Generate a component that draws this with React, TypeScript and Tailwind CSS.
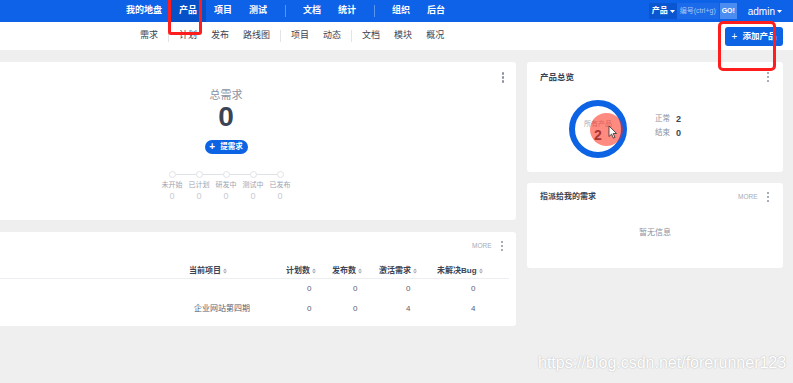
import React from "react";

const Dots = () => (
  <div className="flex flex-col gap-[1.5px]">
    <span className="w-[2.5px] h-[2.5px] rounded-full bg-[#8b91a0]" />
    <span className="w-[2.5px] h-[2.5px] rounded-full bg-[#8b91a0]" />
    <span className="w-[2.5px] h-[2.5px] rounded-full bg-[#8b91a0]" />
  </div>
);

const Caret = () => (
  <svg width="5" height="3" viewBox="0 0 5 3" className="ml-[2px] shrink-0">
    <path d="M0 0h5L2.5 3z" fill="#fff" />
  </svg>
);

const Sort = () => (
  <svg width="4" height="6" viewBox="0 0 4 6" className="ml-[2px]">
    <path d="M0 2.4L2 0.4 4 2.4zM0 3.6h4L2 5.6z" fill="#a6abb6" />
  </svg>
);

const Sep = ({ className }: { className: string }) => <span className={className} />;

const mainNav = ["我的地盘", "产品", "项目", "测试", "|", "文档", "统计", "|", "组织", "后台"];
const subNav = ["需求", "|", "计划", "发布", "路线图", "|", "项目", "动态", "|", "文档", "模块", "概况"];
const steps = ["未开始", "已计划", "研发中", "测试中", "已发布"];

export default function App() {
  return (
    <div className="relative w-[793px] h-[383px] overflow-hidden bg-[#efefef] font-['Liberation_Sans','Noto_Sans_CJK_SC',sans-serif] text-[#3c4353]">
      {/* top nav */}
      <div className="h-[22px] bg-[#0d62e8] flex items-stretch">
        <div className="flex items-stretch ml-[117.5px]">
          {mainNav.map((n, i) =>
            n === "|" ? (
              <div key={i} className="flex items-center mx-[9px]">
                <Sep className="w-px h-[12px] bg-[#5b95f0]" />
              </div>
            ) : (
              <div
                key={i}
                className={`flex items-center px-[8.5px] text-[9px] font-bold text-white ${n === "产品" ? "bg-[#0650c8]" : ""}`}
              >
                {n}
              </div>
            )
          )}
        </div>
        <div className="ml-auto flex items-center pr-[11px]">
          <div className="flex items-center h-[16px]">
            <div className="flex items-center h-full pl-[3px] pr-[2px] bg-[#0a55d0] text-white text-[8px] font-bold whitespace-nowrap">
              产品
              <Caret />
            </div>
            <div className="flex items-center h-full w-[42px] pl-[3px] bg-[#1a6aea] text-[#a9c6f3] text-[7px] whitespace-nowrap">
              编号(ctrl+g)
            </div>
            <div className="flex items-center justify-center h-full w-[17px] ml-[1px] bg-[#4a8cf0] text-white text-[7px] font-bold">
              GO!
            </div>
          </div>
          <div className="flex items-center ml-[11px] text-white text-[10px]">
            admin
            <Caret />
          </div>
        </div>
      </div>

      {/* sub nav */}
      <div className="h-[28px] bg-white flex items-center">
        <div className="flex items-center ml-[133px]">
          {subNav.map((n, i) =>
            n === "|" ? (
              <Sep key={i} className="mx-[3px] w-px h-[12px] bg-[#e2e4e8]" />
            ) : (
              <div key={i} className="px-[7px] text-[9px] text-[#3c4353]">
                {n}
              </div>
            )
          )}
        </div>
        <div className="ml-auto mr-[10px] flex items-center justify-center h-[19px] w-[58px] rounded-[3px] bg-[#0c63e4] text-white text-[8.5px] font-bold">
          <span className="mr-[5px] text-[10px] font-normal">+</span>添加产品
        </div>
      </div>

      {/* content */}
      <div className="flex gap-[11px] pt-[12px] pr-[10px]">
        <div className="w-[516px] flex flex-col gap-[12px]">
          {/* total stories */}
          <div className="h-[158px] bg-white rounded-r-[3px] flex">
            <div className="w-[452px] flex flex-col items-center pt-[26px]">
              <div className="text-[11px] leading-[14px] text-[#8b91a0]">总需求</div>
              <div className="text-[28px] leading-[28px] font-bold mt-[1px] text-[#3c4353]">0</div>
              <div className="mt-[9px] h-[14px] w-[43px] rounded-full bg-[#0c63e4] flex items-center justify-center text-white text-[7.5px] font-bold">
                <span className="mr-[5px] text-[10px] leading-[10px]">+</span>提需求
              </div>
              <div className="mt-[17px] flex items-center">
                {steps.map((s, i) => (
                  <React.Fragment key={s}>
                    {i > 0 && <span className="w-[20px] h-px bg-[#dfe2e6]" />}
                    <span className="w-[7px] h-[7px] rounded-full border border-[#dfe2e6] bg-white" />
                  </React.Fragment>
                ))}
              </div>
              <div className="mt-[2px] flex">
                {steps.map((s) => (
                  <div key={s} className="w-[27px] flex flex-col items-center">
                    <span className="text-[7px] leading-[10px] text-[#9ea3b0]">{s}</span>
                    <span className="text-[9px] leading-[12px] text-[#c7cad1]">0</span>
                  </div>
                ))}
              </div>
            </div>
            <div className="ml-auto pt-[10px] pr-[12px]">
              <Dots />
            </div>
          </div>

          {/* product table */}
          <div className="h-[94px] bg-white rounded-r-[3px] flex flex-col">
            <div className="h-[28px] flex items-center justify-end pr-[13px]">
              <span className="text-[6.5px] text-[#a6abb6] mr-[9px]">MORE</span>
              <Dots />
            </div>
            <div className="mt-[4px] mr-[7px] h-[15px] border-b border-[#eceef1] grid grid-cols-[185px_97px_46px_47px_58px_1fr] items-center text-[8px] font-bold text-[#3c4353]">
              <span />
              <span className="pl-[4px] flex items-center">当前项目<Sort /></span>
              <span className="pl-[4px] flex items-center">计划数<Sort /></span>
              <span className="pl-[4px] flex items-center">发布数<Sort /></span>
              <span className="pl-[4px] flex items-center">激活需求<Sort /></span>
              <span className="pl-[4px] flex items-center">未解决Bug<Sort /></span>
            </div>
            {[
              ["", "0", "0", "0", "0"],
              ["企业网站第四期", "0", "0", "4", "4"],
            ].map((r, i) => (
              <div
                key={i}
                className="h-[20px] mr-[7px] grid grid-cols-[185px_97px_46px_47px_58px_1fr] items-center text-[8px] text-[#5a6070]"
              >
                <span />
                <span className="pl-[9px]">{r[0]}</span>
                <span className="pl-[25px]">{r[1]}</span>
                <span className="pl-[25px]">{r[2]}</span>
                <span className="pl-[31px]">{r[3]}</span>
                <span className="pl-[38px]">{r[4]}</span>
              </div>
            ))}
          </div>
        </div>

        <div className="w-[256px] flex flex-col gap-[11px]">
          {/* product overview */}
          <div className="h-[110px] bg-white rounded-[3px] flex flex-col">
            <div className="h-[30px] flex items-center justify-between pl-[13px] pr-[14px]">
              <span className="text-[8.5px] font-bold text-[#3c4353]">产品总览</span>
              <Dots />
            </div>
            <div className="mt-[8px] pl-[42px] flex items-center">
              <div className="relative w-[58px] h-[58px]">
                <div className="w-[58px] h-[58px] rounded-full border-[6px] border-[#0c63e4] flex flex-col items-center justify-center pt-[3px]">
                  <span className="text-[7px] leading-[9px] text-[#a6abb6]">所有产品</span>
                  <span className="text-[14px] leading-[15px] font-bold text-[#3c4353]">2</span>
                </div>
                <span className="absolute left-[21px] top-[13px] w-[33px] h-[33px] rounded-full bg-[#ff2a18]/55" />
                <svg className="absolute left-[39px] top-[25px]" width="9" height="14" viewBox="0 0 9 14">
                  <path d="M1 1v10.5l2.6-2.4 1.8 4 1.6-.7-1.8-3.9H8.6z" fill="#fff" stroke="#3c3c3c" strokeWidth="0.9" strokeLinejoin="round" />
                </svg>
              </div>
              <div className="ml-[28px] -mt-[6px] flex flex-col gap-[4px]">
                <div className="flex items-center">
                  <span className="text-[7.5px] leading-[10px] text-[#8b91a0] w-[21px]">正常</span>
                  <span className="text-[9px] leading-[10px] font-bold">2</span>
                </div>
                <div className="flex items-center">
                  <span className="text-[7.5px] leading-[10px] text-[#8b91a0] w-[21px]">结束</span>
                  <span className="text-[9px] leading-[10px] font-bold">0</span>
                </div>
              </div>
            </div>
          </div>

          {/* assigned to me */}
          <div className="h-[85px] bg-white rounded-[3px] flex flex-col">
            <div className="h-[28px] flex items-center pl-[13px] pr-[14px]">
              <span className="text-[8px] font-bold text-[#3c4353]">指派给我的需求</span>
              <span className="ml-auto mr-[9px] text-[6.5px] text-[#a6abb6]">MORE</span>
              <Dots />
            </div>
            <div className="flex-1 flex items-center justify-center pb-[13px] text-[8px] text-[#8b91a0]">
              暂无信息
            </div>
          </div>
        </div>
      </div>

      {/* annotations */}
      <div className="absolute left-[168px] top-[-4px] w-[34px] h-[39px] border-[3px] border-[#ff1e1e] rounded-[3px]" />
      <div className="absolute left-[718px] top-[21px] w-[58px] h-[50px] border-[3px] border-[#ff1e1e] rounded-[5px]" />
      <div className="absolute left-[538px] top-[354px] text-[16px] leading-[18px] text-white font-['Liberation_Sans',sans-serif] [text-shadow:0_0_1.5px_rgba(0,0,0,0.3)]">
        https://blog.csdn.net/forerunner123
      </div>
    </div>
  );
}
